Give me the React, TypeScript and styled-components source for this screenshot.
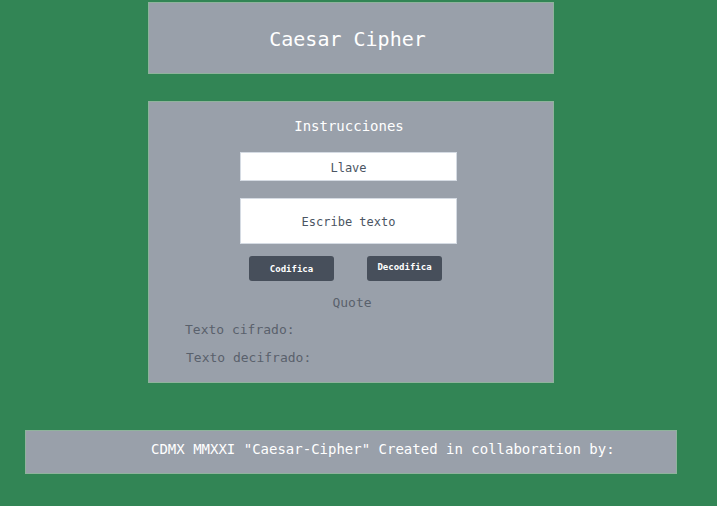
import React from "react";
import styled, { createGlobalStyle } from "styled-components";

const Global = createGlobalStyle`
  html, body { margin: 0; padding: 0; background: #328555; }
  body { font-family: "DejaVu Sans Mono", "Liberation Mono", monospace; }
  * { box-sizing: border-box; }
`;

const Page = styled.div`
  width: 702px;
  min-height: 506px;
  display: flex;
  flex-direction: column;
  align-items: center;
  padding-top: 2px;
`;

const Header = styled.header`
  width: 406px;
  height: 72px;
  background: #99a0aa;
  border: 1px solid #8fb39c;
  display: flex;
  align-items: center;
  justify-content: center;
  padding: 2px 7px 0 0;
`;

const Title = styled.h1`
  margin: 0;
  font-size: 20px;
  font-weight: normal;
  color: #ffffff;
`;

const Panel = styled.section`
  width: 406px;
  height: 282px;
  margin-top: 27px;
  background: #99a0aa;
  border: 1px solid #8fb39c;
  padding-top: 14px;
  display: flex;
  flex-direction: column;
`;

const PanelTitle = styled.h2`
  margin: 0;
  font-size: 14px;
  line-height: 20px;
  font-weight: normal;
  color: #ffffff;
  text-align: center;
  padding-right: 4px;
`;

const KeyInput = styled.input`
  display: block;
  width: 217px;
  height: 29px;
  margin: 16px 0 0 91px;
  border: 1px solid #d5dbe3;
  background: #ffffff;
  font-family: inherit;
  font-size: 12px;
  padding: 3px 0 0;
  text-align: center;
  color: #374151;
  outline: none;
  &::placeholder { color: #4b5563; opacity: 1; }
`;

const TextInput = styled.textarea`
  display: block;
  width: 217px;
  height: 46px;
  margin: 17px 0 0 91px;
  border: 1px solid #d5dbe3;
  background: #ffffff;
  font-family: inherit;
  font-size: 12px;
  line-height: 14px;
  padding: 16px 4px 0;
  text-align: center;
  resize: none;
  color: #374151;
  outline: none;
  &::placeholder { color: #4b5563; opacity: 1; }
`;

const ButtonRow = styled.div`
  display: flex;
  gap: 33px;
  margin: 12px 0 0 100px;
`;

const ActionButton = styled.button<{ $width: number; $shift: number }>`
  width: ${(p) => p.$width}px;
  height: 25px;
  border: none;
  border-radius: 3px;
  background: #474f5b;
  color: #ffffff;
  font-family: inherit;
  font-size: 9px;
  font-weight: bold;
  padding: 0 0 ${(p) => p.$shift}px;
  cursor: pointer;
`;

const Quote = styled.p`
  margin: 13px 0 0;
  font-size: 13px;
  line-height: 18px;
  color: #59616c;
  text-align: center;
  padding-left: 2px;
`;

const Result = styled.p<{ $top: number; $left: number }>`
  margin: ${(p) => p.$top}px 0 0 ${(p) => p.$left}px;
  font-size: 13px;
  line-height: 18px;
  color: #59616c;
`;

const Footer = styled.footer`
  width: 652px;
  height: 44px;
  margin-top: 47px;
  background: #99a0aa;
  border: 1px solid #8fb39c;
  padding: 9px 0 0 125px;
  font-size: 14px;
  line-height: 18px;
  color: #ffffff;
`;

export default function App() {
  return (
    <>
      <Global />
      <Page>
        <Header>
          <Title>Caesar Cipher</Title>
        </Header>
        <Panel>
          <PanelTitle>Instrucciones</PanelTitle>
          <KeyInput placeholder="Llave" />
          <TextInput placeholder="Escribe texto" />
          <ButtonRow>
            <ActionButton $width={85} $shift={0}>Codifica</ActionButton>
            <ActionButton $width={75} $shift={4}>Decodifica</ActionButton>
          </ButtonRow>
          <Quote>Quote</Quote>
          <Result $top={9} $left={36}>Texto cifrado:</Result>
          <Result $top={10} $left={37}>Texto decifrado:</Result>
        </Panel>
        <Footer>CDMX MMXXI "Caesar-Cipher" Created in collaboration by:</Footer>
      </Page>
    </>
  );
}
